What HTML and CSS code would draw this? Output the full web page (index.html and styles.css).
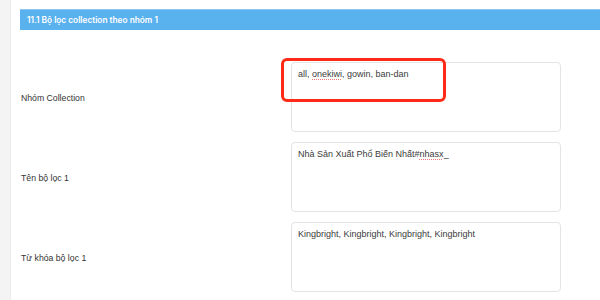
FILE: index.html
```html
<!DOCTYPE html>
<html lang="vi">
<head>
  <meta charset="UTF-8">
  <meta name="viewport" content="width=device-width, initial-scale=1.0">
  <title>Bộ lọc collection</title>
  <link rel="stylesheet" href="styles.css">
</head>
<body>
  <div class="page">
    <div class="side-strip"></div>

    <div class="panel">
      <div class="panel-header">11.1 Bộ lọc collection theo nhóm 1</div>

      <div class="form-body">
        <div class="form-row">
          <label class="form-label">Nhóm Collection</label>
          <div class="field highlighted">
            <div class="field-input">all, <span class="typo">onekiwi</span>, gowin, ban-dan</div>
            <div class="highlight-box"></div>
          </div>
        </div>

        <div class="form-row">
          <label class="form-label">Tên bộ lọc 1</label>
          <div class="field">
            <div class="field-input">Nhà Sản Xuất Phổ Biến Nhất#<span class="typo">nhasx</span>_</div>
          </div>
        </div>

        <div class="form-row">
          <label class="form-label">Từ khóa bộ lọc 1</label>
          <div class="field">
            <div class="field-input">Kingbright, Kingbright, Kingbright, Kingbright</div>
          </div>
        </div>
      </div>
    </div>
  </div>
</body>
</html>
```

FILE: styles.css
```css
body, html {
  margin: 0;
  padding: 0;
  width: 100%;
  height: 100%;
  overflow: hidden;
  background: #fff;
  font-family: 'Inter', 'Noto Sans', sans-serif;
}

.page {
  display: flex;
  height: 100%;
}

.side-strip {
  width: 10px;
  flex-shrink: 0;
  background-color: #f4f4f5;
  border-right: 1px solid #ededee;
}

.panel {
  flex: 1;
  padding: 9px 0 0 9px;
}

.panel-header {
  height: 21px;
  line-height: 21px;
  padding-left: 7px;
  background-color: #59b1ee;
  border-top: 1px solid #8cc6f1;
  box-sizing: border-box;
  color: #fff;
  font-size: 8.3px;
  font-weight: 600;
}

.form-body {
  padding: 32px 0 0 1px;
  display: flex;
  flex-direction: column;
  gap: 10px;
}

.form-row {
  display: grid;
  grid-template-columns: 270px 270px;
  align-items: center;
}

.form-label {
  font-family: 'Liberation Sans', Arial, sans-serif;
  font-size: 8.7px;
  color: #333;
  padding-top: 1px;
}

.field {
  position: relative;
}

.field-input {
  height: 70px;
  box-sizing: border-box;
  padding: 4px 6px;
  border: 1px solid #e4e4e7;
  border-radius: 4px;
  font-family: 'Liberation Sans', Arial, sans-serif;
  font-size: 9px;
  line-height: 14px;
  color: #3b3b3b;
}

.typo {
  text-decoration: underline dotted #e77;
  text-decoration-thickness: 1px;
  text-underline-offset: 2px;
}

.highlight-box {
  position: absolute;
  left: -10px;
  top: -4px;
  width: 165px;
  height: 44px;
  box-sizing: border-box;
  border: 3px solid #fd2a18;
  border-radius: 6px;
}
```
